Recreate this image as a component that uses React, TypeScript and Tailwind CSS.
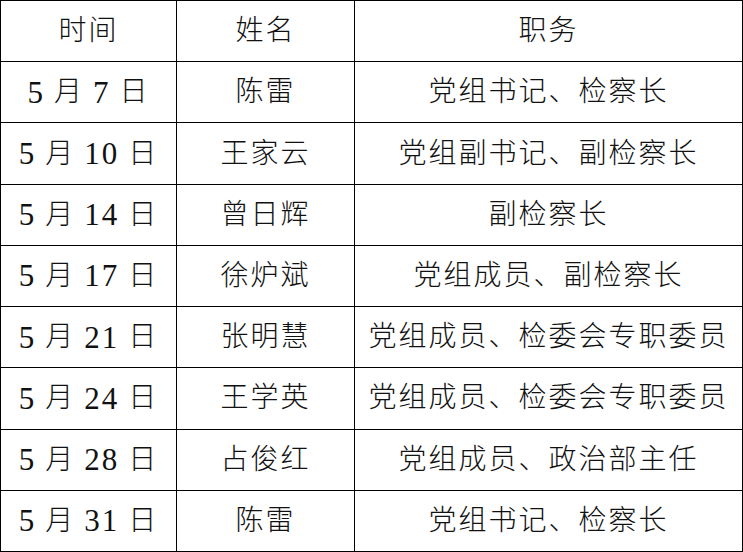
import React from "react";

const rows: [string, string, string, string][] = [
  ["5", "7", "陈雷", "党组书记、检察长"],
  ["5", "10", "王家云", "党组副书记、副检察长"],
  ["5", "14", "曾日辉", "副检察长"],
  ["5", "17", "徐炉斌", "党组成员、副检察长"],
  ["5", "21", "张明慧", "党组成员、检委会专职委员"],
  ["5", "24", "王学英", "党组成员、检委会专职委员"],
  ["5", "28", "占俊红", "党组成员、政治部主任"],
  ["5", "31", "陈雷", "党组书记、检察长"],
];

const font = {
  fontFamily: '"Liberation Serif", "Noto Sans CJK SC", serif',
};

function Cell({ children }: { children: React.ReactNode }) {
  return (
    <div className="flex items-center justify-center border-b border-r border-black text-[28px] leading-none font-light tracking-[2px] text-[#111] whitespace-nowrap">
      {children}
    </div>
  );
}

export default function App() {
  return (
    <div className="w-[743px] h-[552px] bg-white" style={font}>
      <div className="grid h-[552px] w-[743px] grid-cols-[176px_178px_1fr] grid-rows-9 border-l border-t border-black">
        <Cell>时间</Cell>
        <Cell>姓名</Cell>
        <Cell>职务</Cell>
        {rows.map(([m, d, name, role], i) => (
          <React.Fragment key={i}>
            <Cell>
              <span className="text-[31px]">{m}</span>
              <span>&nbsp;月&nbsp;</span>
              <span className="text-[31px]">{d}</span>
              <span>&nbsp;日</span>
            </Cell>
            <Cell>{name}</Cell>
            <Cell>{role}</Cell>
          </React.Fragment>
        ))}
      </div>
    </div>
  );
}
